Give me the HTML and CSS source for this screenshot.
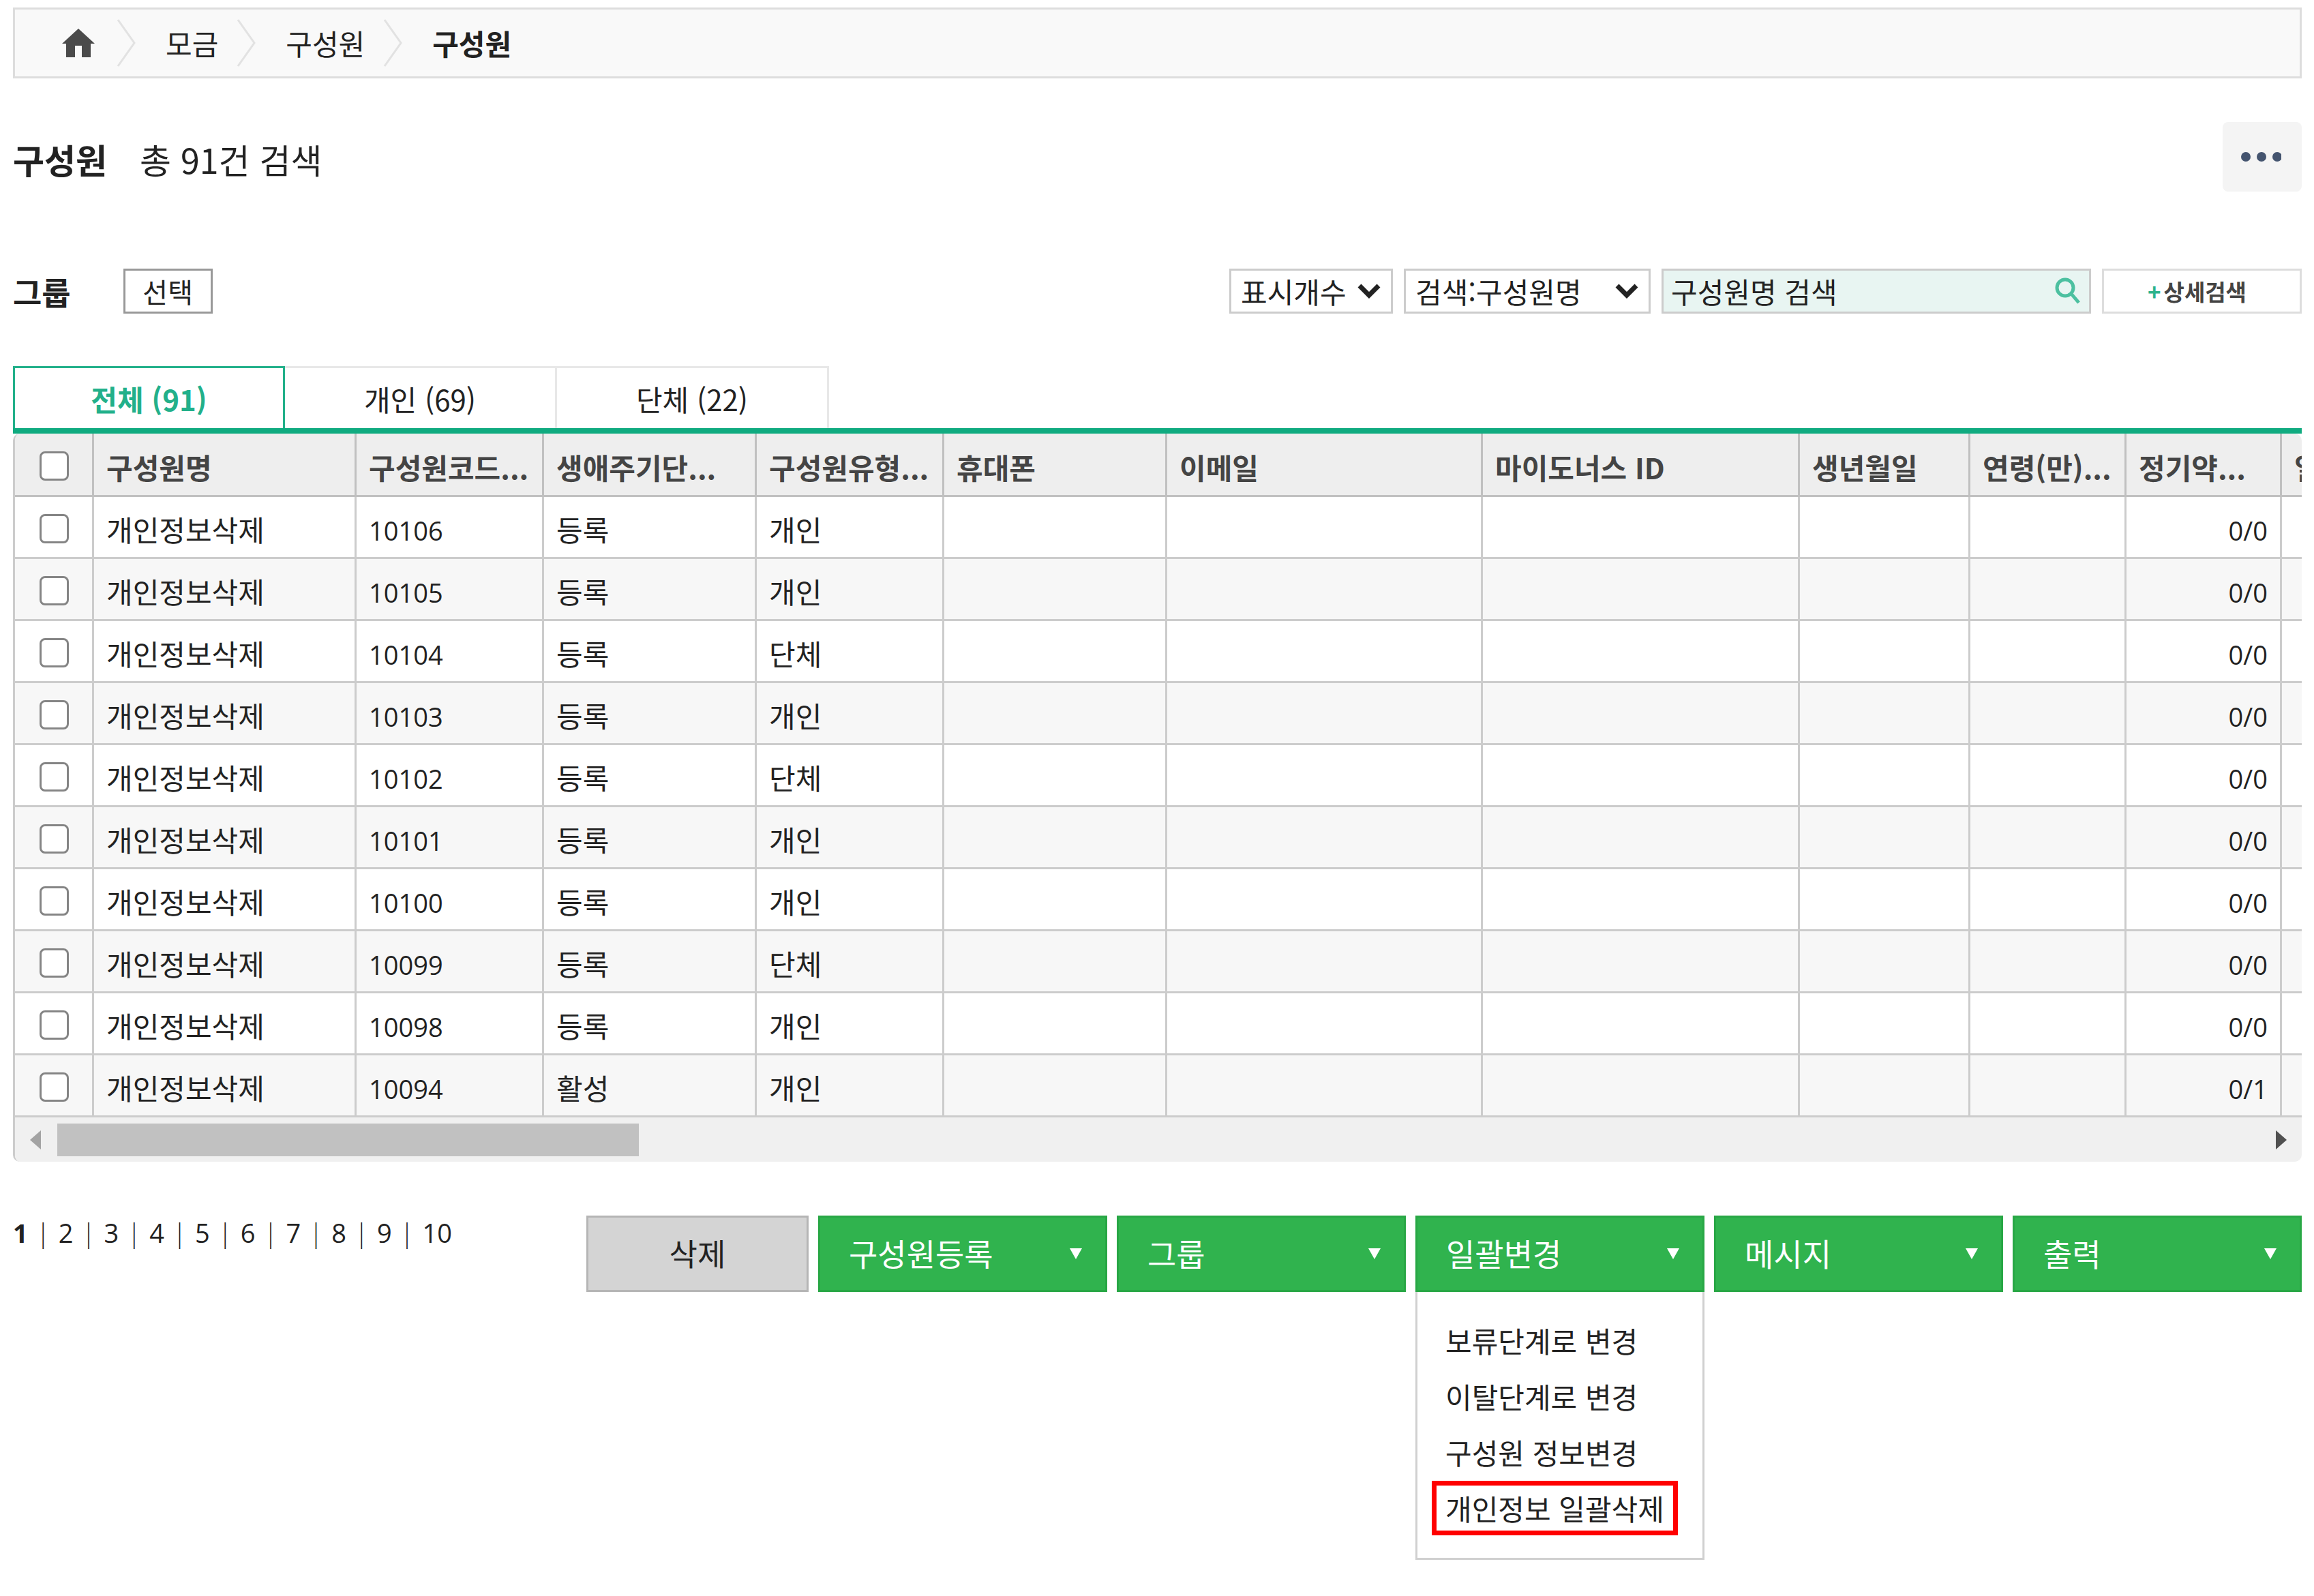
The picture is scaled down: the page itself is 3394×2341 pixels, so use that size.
FILE: index.html
```html
<!DOCTYPE html>
<html lang="ko">
<head>
  <meta charset="UTF-8">
  <title>구성원</title>
  <link rel="stylesheet" href="styles.css">
</head>
<body>
  <nav class="breadcrumb">
    <a class="home" href="#" aria-label="홈">
      <svg width="48" height="42" viewBox="0 0 48 42"><path d="M24 0L48 22H42V42H29V25H19V42H6V22H0Z" fill="#4a4a4a"/></svg>
    </a>
    <svg class="chevron" width="28" height="70" viewBox="0 0 28 70"><path d="M2 1L26 35L2 69"/></svg>
    <a href="#">모금</a>
    <svg class="chevron" width="28" height="70" viewBox="0 0 28 70"><path d="M2 1L26 35L2 69"/></svg>
    <a href="#">구성원</a>
    <svg class="chevron" width="28" height="70" viewBox="0 0 28 70"><path d="M2 1L26 35L2 69"/></svg>
    <a class="current" href="#">구성원</a>
  </nav>

  <header class="pageHeader">
    <h1>구성원</h1>
    <p>총 91건 검색</p>
    <button class="moreBtn" aria-label="더보기">
      <svg width="60" height="18" viewBox="0 0 60 18" fill="#44546f"><circle cx="8" cy="9" r="7"/><circle cx="31" cy="9" r="7"/><circle cx="54" cy="9" r="7"/></svg>
    </button>
  </header>

  <!-- 검색 조건 -->
  <form class="filters">
    <span class="groupLabel">그룹</span>
    <button class="selectBtn" type="button">선택</button>
    <div class="searchArea">
      <div class="selectBox countSelect">
        <select aria-label="표시개수"><option>표시개수</option></select>
        <svg width="34" height="22" viewBox="0 0 34 22"><path d="M3 3L17 17L31 3"/></svg>
      </div>
      <div class="selectBox fieldSelect">
        <select aria-label="검색 항목"><option>검색:구성원명</option></select>
        <svg width="34" height="22" viewBox="0 0 34 22"><path d="M3 3L17 17L31 3"/></svg>
      </div>
      <div class="searchBox">
        <input type="text" placeholder="구성원명 검색" aria-label="구성원명 검색">
        <button type="button" aria-label="검색">
          <svg width="38" height="40" viewBox="0 0 38 40"><circle cx="15" cy="15" r="12"/><path d="M24 24L35 37"/></svg>
        </button>
      </div>
      <button class="detailBtn" type="button"><span>+</span>상세검색</button>
    </div>
  </form>

  <nav class="tabs">
    <button class="active">전체 (91)</button>
    <button>개인 (69)</button>
    <button>단체 (22)</button>
  </nav>

  <!-- 구성원 목록 -->
  <div class="grid">
    <div class="gridBody">
      <table>
        <colgroup>
          <col class="colCheck"><col class="colName"><col class="colCode"><col class="colStage">
          <col class="colType"><col class="colPhone"><col class="colEmail"><col class="colId">
          <col class="colBirth"><col class="colAge"><col class="colPledge"><col class="colOnce">
        </colgroup>
        <thead>
          <tr><th><input type="checkbox" aria-label="전체 선택"></th><th>구성원명</th><th>구성원코드...</th><th>생애주기단...</th><th>구성원유형...</th><th>휴대폰</th><th>이메일</th><th>마이도너스 ID</th><th>생년월일</th><th>연령(만)...</th><th>정기약...</th><th>일시...</th></tr>
        </thead>
        <tbody>
          <tr><td><input type="checkbox" aria-label="10106"></td><td>개인정보삭제</td><td class="num">10106</td><td>등록</td><td>개인</td><td></td><td></td><td></td><td></td><td></td><td class="num right">0/0</td><td></td></tr>
          <tr><td><input type="checkbox" aria-label="10105"></td><td>개인정보삭제</td><td class="num">10105</td><td>등록</td><td>개인</td><td></td><td></td><td></td><td></td><td></td><td class="num right">0/0</td><td></td></tr>
          <tr><td><input type="checkbox" aria-label="10104"></td><td>개인정보삭제</td><td class="num">10104</td><td>등록</td><td>단체</td><td></td><td></td><td></td><td></td><td></td><td class="num right">0/0</td><td></td></tr>
          <tr><td><input type="checkbox" aria-label="10103"></td><td>개인정보삭제</td><td class="num">10103</td><td>등록</td><td>개인</td><td></td><td></td><td></td><td></td><td></td><td class="num right">0/0</td><td></td></tr>
          <tr><td><input type="checkbox" aria-label="10102"></td><td>개인정보삭제</td><td class="num">10102</td><td>등록</td><td>단체</td><td></td><td></td><td></td><td></td><td></td><td class="num right">0/0</td><td></td></tr>
          <tr><td><input type="checkbox" aria-label="10101"></td><td>개인정보삭제</td><td class="num">10101</td><td>등록</td><td>개인</td><td></td><td></td><td></td><td></td><td></td><td class="num right">0/0</td><td></td></tr>
          <tr><td><input type="checkbox" aria-label="10100"></td><td>개인정보삭제</td><td class="num">10100</td><td>등록</td><td>개인</td><td></td><td></td><td></td><td></td><td></td><td class="num right">0/0</td><td></td></tr>
          <tr><td><input type="checkbox" aria-label="10099"></td><td>개인정보삭제</td><td class="num">10099</td><td>등록</td><td>단체</td><td></td><td></td><td></td><td></td><td></td><td class="num right">0/0</td><td></td></tr>
          <tr><td><input type="checkbox" aria-label="10098"></td><td>개인정보삭제</td><td class="num">10098</td><td>등록</td><td>개인</td><td></td><td></td><td></td><td></td><td></td><td class="num right">0/0</td><td></td></tr>
          <tr><td><input type="checkbox" aria-label="10094"></td><td>개인정보삭제</td><td class="num">10094</td><td>활성</td><td>개인</td><td></td><td></td><td></td><td></td><td></td><td class="num right">0/1</td><td></td></tr>
        </tbody>
      </table>
    </div>
    <div class="scrollbar">
      <svg width="16" height="28" viewBox="0 0 16 28"><path d="M16 0V28L0 14Z" fill="#a3a3a3"/></svg>
      <div class="track"><div class="thumb"></div></div>
      <svg width="16" height="28" viewBox="0 0 16 28"><path d="M0 0V28L16 14Z" fill="#505050"/></svg>
    </div>
  </div>

  <footer class="bottomBar">
    <nav class="pager">
      <a class="current" href="#">1</a><span>|</span>
      <a href="#">2</a><span>|</span>
      <a href="#">3</a><span>|</span>
      <a href="#">4</a><span>|</span>
      <a href="#">5</a><span>|</span>
      <a href="#">6</a><span>|</span>
      <a href="#">7</a><span>|</span>
      <a href="#">8</a><span>|</span>
      <a href="#">9</a><span>|</span>
      <a href="#">10</a>
    </nav>
    <div class="actions">
      <button class="deleteBtn">삭제</button>
      <button class="menuBtn">구성원등록<svg width="18" height="16" viewBox="0 0 18 16"><path d="M0 0H18L9 16Z"/></svg></button>
      <button class="menuBtn">그룹<svg width="18" height="16" viewBox="0 0 18 16"><path d="M0 0H18L9 16Z"/></svg></button>
      <div class="dropdown">
        <button class="menuBtn">일괄변경<svg width="18" height="16" viewBox="0 0 18 16"><path d="M0 0H18L9 16Z"/></svg></button>
        <ul class="menu">
          <li><a href="#">보류단계로 변경</a></li>
          <li><a href="#">이탈단계로 변경</a></li>
          <li><a href="#">구성원 정보변경</a></li>
          <li><a class="marked" href="#">개인정보 일괄삭제</a></li>
        </ul>
      </div>
      <button class="menuBtn">메시지<svg width="18" height="16" viewBox="0 0 18 16"><path d="M0 0H18L9 16Z"/></svg></button>
      <button class="menuBtn">출력<svg width="18" height="16" viewBox="0 0 18 16"><path d="M0 0H18L9 16Z"/></svg></button>
    </div>
  </footer>
</body>
</html>
```
FILE: styles.css
```css
* {
  box-sizing: border-box;
}

body {
  min-height: 100vh;
  margin: 0;
  padding: 11px 18px 48px 19px;
  background-color: #fff;
  color: #222;
  font-family: "Noto Sans CJK KR", sans-serif;
  font-size: 42px;
  line-height: 60px;
}

a {
  color: inherit;
  text-decoration: none;
}

button, input, select {
  margin: 0;
  font: inherit;
  color: inherit;
}

button {
  cursor: pointer;
}

svg {
  display: block;
  flex: none;
}

/* breadcrumb */
.breadcrumb {
  display: flex;
  align-items: center;
  height: 104px;
  padding-left: 69px;
  border: 3px solid #ddd;
  background-color: #f9f9f9;
}

.home {
  margin-right: 5px;
}

.chevron {
  margin: 0 44px 0 27px;
  fill: none;
  stroke: #e2e2e2;
  stroke-width: 3;
}

.breadcrumb .current {
  font-weight: bold;
}

/* title */
.pageHeader {
  display: flex;
  align-items: center;
  height: 102px;
  margin-top: 64px;
  font-size: 50px;
}

.pageHeader h1 {
  margin: 0;
  padding-top: 6px;
  font-size: 50px;
}

.pageHeader p {
  margin: 0 auto 0 48px;
  padding-top: 6px;
}

.moreBtn {
  display: flex;
  align-items: center;
  justify-content: center;
  width: 116px;
  height: 102px;
  padding: 0 4px 0 0;
  border: none;
  border-radius: 8px;
  background-color: #f4f4f4;
}

/* filters */
.filters {
  display: flex;
  align-items: center;
  height: 66px;
  margin-top: 113px;
}

.groupLabel {
  font-size: 46px;
  font-weight: bold;
}

.selectBtn {
  width: 131px;
  height: 66px;
  margin-left: 77px;
  padding: 0;
  border: 3px solid #999;
  background-color: #fff;
  font-size: 40px;
  line-height: 56px;
}

.searchArea {
  display: flex;
  gap: 16px;
  margin-left: auto;
}

.selectBox {
  display: grid;
  align-items: center;
}

.selectBox > * {
  grid-area: 1 / 1;
}

.selectBox select {
  width: 100%;
  height: 66px;
  padding: 0 14px;
  border: 3px solid #ccc;
  border-radius: 0;
  background-color: #fff;
  appearance: none;
}

.selectBox svg {
  justify-self: end;
  margin-right: 18px;
  fill: none;
  stroke: #222;
  stroke-width: 7;
  pointer-events: none;
}

.countSelect {
  width: 240px;
}

.fieldSelect {
  width: 362px;
}

.searchBox {
  display: flex;
  align-items: center;
  width: 630px;
  height: 66px;
  padding-right: 12px;
  border: 3px solid #ccc;
  background-color: #e8f5f2;
}

.searchBox input {
  flex: 1;
  min-width: 0;
  height: 60px;
  padding: 0 0 0 11px;
  border: none;
  background: none;
  outline: none;
}

.searchBox input::placeholder {
  color: #222;
}

.searchBox button {
  padding: 0;
  border: none;
  background: none;
}

.searchBox svg {
  fill: none;
  stroke: #4cc0a0;
  stroke-width: 5;
}

.detailBtn {
  width: 293px;
  height: 66px;
  padding: 0 14px 0 0;
  border: 3px solid #ddd;
  background-color: #fff;
  color: #444;
  font-size: 33px;
  font-weight: bold;
}

.detailBtn span {
  margin-right: 4px;
  color: #2db38b;
}

/* tabs */
.tabs {
  display: flex;
  margin-top: 77px;
  border-bottom: 8px solid #10ab80;
}

.tabs button {
  width: 399px;
  height: 91px;
  padding: 2px 0 0;
  border: 3px solid #e8e8e8;
  border-width: 3px 3px 0 0;
  background-color: #fff;
}

.tabs .active {
  border-color: #22b08a;
  border-left-width: 3px;
  color: #22b08a;
  font-weight: bold;
}

/* grid */
.grid {
  overflow: hidden;
  border-left: 3px solid #ccc;
  border-radius: 10px;
}

.gridBody {
  overflow: hidden;
}

table {
  width: 3500px;
  border-collapse: separate;
  border-spacing: 0;
  table-layout: fixed;
}

th, td {
  height: 91px;
  padding: 6px 18px 0;
  border-right: 3px solid #ccc;
  border-bottom: 3px solid #ccc;
  text-align: left;
  white-space: nowrap;
}

th {
  height: 93px;
  padding-top: 8px;
  border-color: #c0c0c0;
  background-color: #eee;
  color: #444;
}

tbody tr:nth-child(even) {
  background-color: #f7f7f7;
}

th:first-child, td:first-child {
  padding: 4px 0 0 36px;
}

input[type="checkbox"] {
  display: block;
  width: 43px;
  height: 43px;
  border: 3px solid #858585;
  border-radius: 8px;
  background-color: #fff;
  appearance: none;
}

td.num {
  padding-top: 10px;
  font-family: "Open Sans", "Noto Sans CJK KR", sans-serif;
  font-size: 38px;
}

.right {
  text-align: right;
}

.colCheck { width: 116px; }
.colName { width: 385px; }
.colCode { width: 275px; }
.colStage { width: 312px; }
.colType { width: 275px; }
.colPhone { width: 327px; }
.colEmail { width: 463px; }
.colId { width: 465px; }
.colBirth { width: 250px; }
.colAge { width: 229px; }
.colPledge { width: 228px; }
.colOnce { width: 175px; }

.scrollbar {
  display: flex;
  align-items: center;
  gap: 24px;
  height: 65px;
  padding: 0 22px;
  background-color: #f0f0f0;
}

.track {
  flex: 1;
}

.thumb {
  width: 26.4%;
  height: 48px;
  background-color: #c1c1c1;
}

/* bottom */
.bottomBar {
  display: flex;
  align-items: flex-start;
  justify-content: space-between;
  margin-top: 79px;
}

.pager {
  display: flex;
  font-family: "Open Sans", "Noto Sans CJK KR", sans-serif;
  font-size: 38px;
  line-height: 50px;
}

.pager span {
  width: 45px;
  text-align: center;
  font-weight: 300;
}

.pager .current {
  font-weight: bold;
}

.actions {
  display: flex;
  gap: 14px;
  font-size: 46px;
}

.deleteBtn {
  width: 326px;
  height: 112px;
  padding-bottom: 4px;
  border: 3px solid #b5b5b5;
  background-color: #d4d4d4;
  font-size: 45px;
}

.menuBtn {
  display: flex;
  align-items: center;
  justify-content: space-between;
  width: 424px;
  height: 112px;
  padding: 0 34px 4px 42px;
  border: 3px solid #28a745;
  background-color: #30b34e;
  color: #fff;
}

.menuBtn svg {
  margin-top: 4px;
  fill: #fff;
}

.dropdown {
  position: relative;
}

.menu {
  position: absolute;
  top: 100%;
  left: 0;
  width: 100%;
  margin: 0;
  padding: 31px 0 31px 21px;
  border: 3px solid #d0d0d0;
  border-top: none;
  background-color: #fff;
  font-size: 42px;
  list-style: none;
}

.menu li {
  display: flex;
  height: 82px;
}

.menu a {
  height: 80px;
  padding: 0 13px;
  border: 7px solid transparent;
  line-height: 66px;
  white-space: nowrap;
}

.menu .marked {
  border-color: #f00;
}
```
